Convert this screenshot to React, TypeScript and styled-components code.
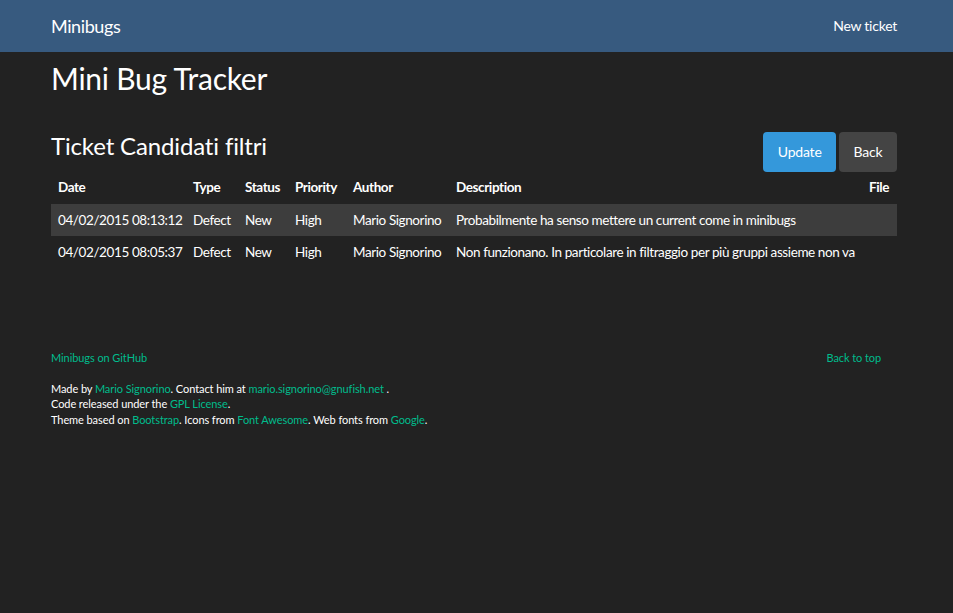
import React from 'react'
import styled, { createGlobalStyle } from 'styled-components'

const GlobalStyle = createGlobalStyle`
  html, body {
    margin: 0;
    padding: 0;
    background: #222222;
    color: #ffffff;
    font-family: Lato, "Open Sans", "Liberation Sans", sans-serif;
    font-size: 15px;
  }
`

const Navbar = styled.nav`
  background-color: #375a7f;
  height: 52px;
`

const Container = styled.div`
  width: 846px;
  margin-left: 51px;
`

const NavInner = styled(Container)`
  display: flex;
  align-items: center;
  justify-content: space-between;
  height: 52px;
`

const Brand = styled.a`
  color: #ffffff;
  font-size: 18px;
  letter-spacing: -0.4px;
  text-decoration: none;
  margin-top: -1px;
`

const NavLink = styled.a`
  color: #ffffff;
  font-size: 14px;
  letter-spacing: -0.25px;
  text-decoration: none;
  margin-top: -1px;
`

const Title = styled.h1`
  font-size: 30px;
  font-weight: 400;
  line-height: 33px;
  letter-spacing: -0.25px;
  margin: 10px 0 0;
`

const SectionHeader = styled.div`
  display: flex;
  justify-content: space-between;
  align-items: flex-start;
  margin-top: 37px;
`

const SubTitle = styled.h2`
  font-size: 24px;
  font-weight: 400;
  line-height: 28px;
  letter-spacing: -0.15px;
  margin: 0;
`

const ButtonGroup = styled.div`
  display: flex;
  gap: 3px;
`

const Button = styled.a<{ $variant: 'info' | 'default' }>`
  display: inline-block;
  height: 40px;
  line-height: 40px;
  padding: 0 14.5px;
  border-radius: 4px;
  font-size: 14px;
  letter-spacing: -0.2px;
  color: #ffffff;
  text-decoration: none;
  background-color: ${p => (p.$variant === 'info' ? '#3498db' : '#444444')};
`

const Table = styled.table`
  width: 100%;
  table-layout: fixed;
  border-collapse: collapse;
  font-size: 13.5px;
  letter-spacing: -0.4px;
`

const Th = styled.th<{ $right?: boolean }>`
  text-align: ${p => (p.$right ? 'right' : 'left')};
  font-weight: 700;
  padding: 5px ${p => (p.$right ? '8px' : '6px')} 7px 8px;
  line-height: 20px;
  white-space: nowrap;

  &:first-child {
    padding-left: 7px;
  }
`

const Row = styled.tr<{ $striped?: boolean }>`
  background-color: ${p => (p.$striped ? '#3d3d3d' : 'transparent')};
`

const Td = styled.td`
  padding: 6px 6px 6px 8px;
  line-height: 20px;
  white-space: nowrap;
  overflow: hidden;

  &:first-child {
    padding-left: 7px;
  }
`

const Footer = styled.footer`
  margin-top: 82px;
  font-size: 11px;
  line-height: 15.5px;
  letter-spacing: -0.08px;
`

const FooterTop = styled.div`
  display: flex;
  justify-content: space-between;
  padding-right: 16px;
  margin-bottom: 15px;
`

const Link = styled.a`
  color: #00bc8c;
  text-decoration: none;
`

interface ITicket {
  date: string
  type: string
  status: string
  priority: string
  author: string
  description: string
}

const tickets: ITicket[] = [
  {
    date: '04/02/2015 08:13:12',
    type: 'Defect',
    status: 'New',
    priority: 'High',
    author: 'Mario Signorino',
    description: 'Probabilmente ha senso mettere un current come in minibugs',
  },
  {
    date: '04/02/2015 08:05:37',
    type: 'Defect',
    status: 'New',
    priority: 'High',
    author: 'Mario Signorino',
    description:
      'Non funzionano. In particolare in filtraggio per più gruppi assieme non va',
  },
]

const App: React.FC = () => (
  <>
    <GlobalStyle />
    <Navbar>
      <NavInner>
        <Brand href="#">Minibugs</Brand>
        <NavLink href="#">New ticket</NavLink>
      </NavInner>
    </Navbar>
    <Container>
      <Title>Mini Bug Tracker</Title>
      <SectionHeader>
        <SubTitle>Ticket Candidati filtri</SubTitle>
        <ButtonGroup>
          <Button $variant="info" href="#">
            Update
          </Button>
          <Button $variant="default" href="#">
            Back
          </Button>
        </ButtonGroup>
      </SectionHeader>
      <Table>
        <colgroup>
          <col style={{ width: 134 }} />
          <col style={{ width: 52 }} />
          <col style={{ width: 50 }} />
          <col style={{ width: 58 }} />
          <col style={{ width: 103 }} />
          <col />
          <col style={{ width: 40 }} />
        </colgroup>
        <thead>
          <tr>
            <Th>Date</Th>
            <Th>Type</Th>
            <Th>Status</Th>
            <Th>Priority</Th>
            <Th>Author</Th>
            <Th>Description</Th>
            <Th $right>File</Th>
          </tr>
        </thead>
        <tbody>
          {tickets.map((t, i) => (
            <Row key={t.date} $striped={i % 2 === 0}>
              <Td>{t.date}</Td>
              <Td>{t.type}</Td>
              <Td>{t.status}</Td>
              <Td>{t.priority}</Td>
              <Td>{t.author}</Td>
              <Td>{t.description}</Td>
              <Td />
            </Row>
          ))}
        </tbody>
      </Table>
      <Footer>
        <FooterTop>
          <Link href="#">Minibugs on GitHub</Link>
          <Link href="#">Back to top</Link>
        </FooterTop>
        <div>
          Made by <Link href="#">Mario Signorino</Link>. Contact him at{' '}
          <Link href="#">mario.signorino@gnufish.net</Link> .
        </div>
        <div>
          Code released under the <Link href="#">GPL License</Link>.
        </div>
        <div>
          Theme based on <Link href="#">Bootstrap</Link>. Icons from{' '}
          <Link href="#">Font Awesome</Link>. Web fonts from{' '}
          <Link href="#">Google</Link>.
        </div>
      </Footer>
    </Container>
  </>
)

export default App
